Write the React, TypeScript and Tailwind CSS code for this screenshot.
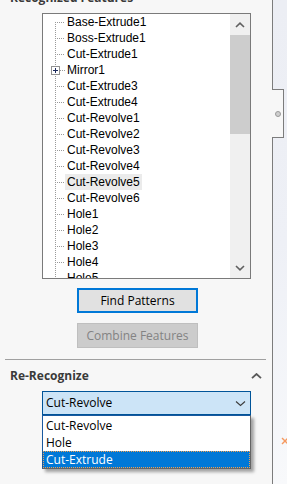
import React from "react";

const items = [
  "Base-Extrude1",
  "Boss-Extrude1",
  "Cut-Extrude1",
  "Mirror1",
  "Cut-Extrude3",
  "Cut-Extrude4",
  "Cut-Revolve1",
  "Cut-Revolve2",
  "Cut-Revolve3",
  "Cut-Revolve4",
  "Cut-Revolve5",
  "Cut-Revolve6",
  "Hole1",
  "Hole2",
  "Hole3",
  "Hole4",
  "Hole5",
];

const DOT = "#9a9a9a";

function TreeLines({ first, plus }: { first: boolean; plus: boolean }) {
  return (
    <svg width="22" height="16" className="shrink-0 block" shapeRendering="crispEdges">
      {plus ? (
        <>
          <line x1="12.5" y1="0" x2="12.5" y2="4" stroke={DOT} strokeDasharray="1 1" />
          <line x1="12.5" y1="14" x2="12.5" y2="16" stroke={DOT} strokeDasharray="1 1" />
          <rect x="8.5" y="4.5" width="8" height="8" fill="#ffffff" stroke="#919191" />
          <line x1="10" y1="8.5" x2="15" y2="8.5" stroke="#1c2a5c" />
          <line x1="12.5" y1="6" x2="12.5" y2="11" stroke="#1c2a5c" />
          <line x1="17" y1="8.5" x2="22" y2="8.5" stroke={DOT} strokeDasharray="1 1" />
        </>
      ) : (
        <>
          <line
            x1="12.5"
            y1={first ? 8 : 0}
            x2="12.5"
            y2="16"
            stroke={DOT}
            strokeDasharray="1 1"
          />
          <line x1="14" y1="8.5" x2="22" y2="8.5" stroke={DOT} strokeDasharray="1 1" />
        </>
      )}
    </svg>
  );
}

function Tree() {
  return (
    <div className="ml-[42px] mt-[7px] w-[209px] h-[266px] border border-[#7a7a7a] bg-white flex">
      <div className="flex-1 overflow-hidden font-['Liberation_Sans_Narrow','Liberation_Sans',sans-serif] text-[12px] text-black">
        {items.map((name, i) => (
          <div key={name} className="h-[16px] flex items-center">
            <TreeLines first={i === 0} plus={name === "Mirror1"} />
            <span
              className={
                "px-[2px] leading-[16px] whitespace-nowrap " +
                (name === "Cut-Revolve5" ? "bg-[#ebebeb]" : "")
              }
            >
              {name}
            </span>
          </div>
        ))}
      </div>
      <div className="w-[20px] bg-[#f0f0f0] flex flex-col">
        <div className="h-[21px] flex items-center justify-center">
          <svg width="10" height="6" viewBox="0 0 10 6">
            <polyline points="1,5 5,1.2 9,5" fill="none" stroke="#606060" strokeWidth="1.6" />
          </svg>
        </div>
        <div className="h-[99px] bg-[#cdcdcd]" />
        <div className="flex-1" />
        <div className="h-[20px] flex items-center justify-center">
          <svg width="10" height="6" viewBox="0 0 10 6">
            <polyline points="1,1 5,4.8 9,1" fill="none" stroke="#606060" strokeWidth="1.6" />
          </svg>
        </div>
      </div>
    </div>
  );
}

export default function App() {
  return (
    <div className="relative w-[287px] h-[484px] overflow-hidden flex font-['Open_Sans',sans-serif]">
      <div className="w-[273px] h-full bg-[#f7f7f7] border-r border-[#7c7c7c] flex flex-col shrink-0">
        <div className="mt-[-10px] pl-[10px] text-[12px] leading-[16px] font-bold text-[#3a3a3a] whitespace-nowrap">
          Recognized Features
        </div>
        <Tree />
        <div className="ml-[77px] mt-[9px] w-[121px] h-[25px] border-2 border-[#0078d7] bg-[#e1e1e1] flex items-center justify-center text-[12px] text-black">
          Find Patterns
        </div>
        <div className="ml-[77px] mt-[10px] w-[121px] h-[25px] border border-[#bfbfbf] bg-[#cccccc] flex items-center justify-center text-[12px] text-[#838383]">
          Combine Features
        </div>
        <div className="ml-[5px] mt-[11px] w-[261px] h-px bg-[#a0a0a0]" />
        <div className="mt-[8px] pl-[10px] pr-[10px] h-[16px] flex items-center justify-between">
          <span className="text-[12px] leading-[16px] font-bold text-[#3a3a3a]">Re-Recognize</span>
          <svg width="11" height="6" viewBox="0 0 11 6">
            <polyline points="1,5.2 5.5,1 10,5.2" fill="none" stroke="#5a5a5a" strokeWidth="1.8" />
          </svg>
        </div>
        <div className="relative ml-[42px] mt-[7px] w-[209px]">
          <div className="h-[24px] border border-[#005499] bg-[#cce4f7] flex items-center justify-between pl-[3px] pr-[4px] text-[12px] text-black">
            <span>Cut-Revolve</span>
            <svg width="11" height="7" viewBox="0 0 11 7">
              <polyline points="1,1.5 5.5,5.5 10,1.5" fill="none" stroke="#3c3c3c" strokeWidth="1.1" />
            </svg>
          </div>
          <div className="absolute left-0 top-full w-[209px] border border-[#1a5aa0] border-r-[#646464] border-b-[#646464] bg-white pt-[1px] text-[12px] shadow-[3px_3px_3px_rgba(0,0,0,0.35)]">
            <div className="h-[17px] leading-[17px] pl-[3px] text-black">Cut-Revolve</div>
            <div className="h-[17px] leading-[17px] pl-[3px] text-black">Hole</div>
            <div className="h-[17px] leading-[17px] pl-[3px] text-white bg-[#0078d7] outline outline-1 outline-dotted outline-[#f0a050] -outline-offset-1">
              Cut-Extrude
            </div>
          </div>
        </div>
      </div>
      <div className="flex-1 h-full bg-linear-to-b from-[#eceef4] via-[#eef0f6] to-[#f8f9fb]" />
      <div className="absolute left-[272px] top-[89px] w-[12px] h-[49px] bg-[#f7f7f7] border-t border-r border-b border-[#7c7c7c] flex items-center justify-center">
        <div className="w-[6px] h-[6px] rounded-full bg-[#cfcfcf] border border-[#9a9a9a]" />
      </div>
      <svg className="absolute left-[281px] top-[437px]" width="8" height="8" viewBox="0 0 8 8">
        <line x1="1" y1="1" x2="7" y2="7" stroke="#f59a60" strokeWidth="1.4" />
        <line x1="1" y1="7" x2="7" y2="1" stroke="#f59a60" strokeWidth="1.4" />
      </svg>
    </div>
  );
}
